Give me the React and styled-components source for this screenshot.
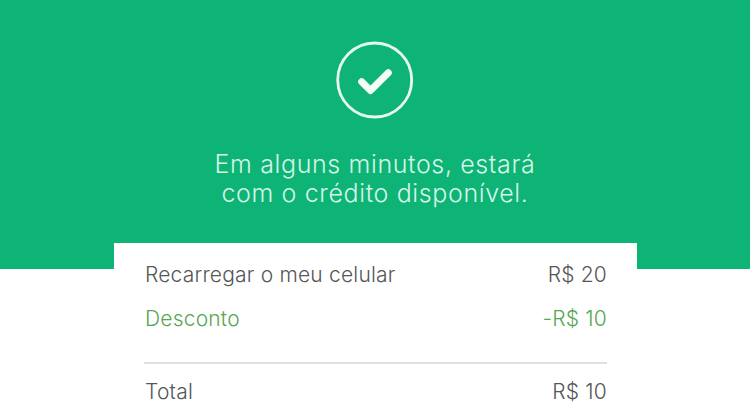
import React from "react";
import styled, { createGlobalStyle } from "styled-components";

const Global = createGlobalStyle`
  html, body { margin: 0; padding: 0; background: #fff; }
  body { width: 750px; height: 420px; overflow: hidden; font-family: "Inter", "Liberation Sans", sans-serif; font-weight: 350; }
`;

const Page = styled.div`
  width: 750px;
  height: 420px;
  overflow: hidden;
  background: #fff;
`;

const Hero = styled.header`
  height: 269px;
  box-sizing: border-box;
  padding-top: 41px;
  background: #0db475;
  display: flex;
  flex-direction: column;
  align-items: center;
`;

const Badge = styled.svg`
  width: 78px;
  height: 78px;
  display: block;
`;

const Message = styled.p`
  margin: 31px 0 0;
  color: #d6f5e8;
  font-size: 25px;
  line-height: 29px;
  letter-spacing: 0.62px;
  text-align: center;
`;

const Card = styled.section`
  width: 523px;
  box-sizing: border-box;
  margin: -26px 0 0 114px;
  padding: 18px 30px 0 31px;
  background: #fff;
  position: relative;
`;

const Row = styled.div`
  display: flex;
  justify-content: space-between;
  height: 28px;
  line-height: 28px;
  font-size: 21px;
  letter-spacing: 0.2px;
  color: ${(p) => (p.$accent ? "#55a750" : "#555658")};
  margin-bottom: ${(p) => p.$gap || 0}px;
`;

const Rule = styled.hr`
  height: 2px;
  margin: 0 0 14px -1px;
  border: 0;
  background: #dfdfdf;
`;

export default function App() {
  return (
    <Page>
      <Global />
      <Hero>
        <Badge viewBox="0 0 78 78" aria-hidden="true">
          <circle cx="38.7" cy="39" r="37" fill="none" stroke="#e6f8f0" strokeWidth="2.8" />
          <path d="M25.7 40.7 L34.5 49.5 L52.3 31.7" fill="none" stroke="#f4fcf8" strokeWidth="7" strokeLinecap="round" strokeLinejoin="round" />
        </Badge>
        <Message>
          Em alguns minutos, estará
          <br />
          com o crédito disponível.
        </Message>
      </Hero>
      <Card>
        <Row $gap={16}>
          <span>Recarregar o meu celular</span>
          <span>R$ 20</span>
        </Row>
        <Row $accent $gap={29}>
          <span>Desconto</span>
          <span>-R$ 10</span>
        </Row>
        <Rule />
        <Row>
          <span>Total</span>
          <span>R$ 10</span>
        </Row>
      </Card>
    </Page>
  );
}
